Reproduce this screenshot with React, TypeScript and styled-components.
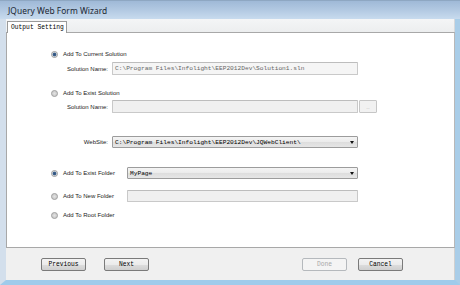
import styled, { createGlobalStyle } from "styled-components";

const GlobalStyle = createGlobalStyle`
  html, body {
    margin: 0;
    padding: 0;
    background: #ffffff;
  }
  * {
    box-sizing: border-box;
  }
`;

type RadioProps = { $checked?: boolean };

const Radio = ({ checked }: { checked?: boolean }) => (
  <RadioCircle $checked={checked} aria-checked={checked} role="radio" />
);

const App = () => {
  return (
    <>
      <GlobalStyle />
      <Window>
        <TitleBar>JQuery Web Form Wizard</TitleBar>
        <TabStrip>
          <Tab>Output Setting</Tab>
        </TabStrip>
        <Content>
          <RadioRow $top={16}>
            <Radio checked />
            <RadioLabel>Add To Current Solution</RadioLabel>
          </RadioRow>
          <FieldRow $top={3} $height={13}>
            <FieldLabel>Solution Name:</FieldLabel>
            <TextBox $readOnly>C:\Program Files\Infolight\EEP2012Dev\Solution1.sln</TextBox>
          </FieldRow>

          <RadioRow $top={13}>
            <Radio />
            <RadioLabel>Add To Exist Solution</RadioLabel>
          </RadioRow>
          <FieldRow $top={2} $height={13}>
            <FieldLabel>Solution Name:</FieldLabel>
            <TextBox $disabled />
            <BrowseButton>..</BrowseButton>
          </FieldRow>

          <FieldRow $top={23} $height={12}>
            <FieldLabel>WebSite:</FieldLabel>
            <Select>
              <span>C:\Program Files\Infolight\EEP2012Dev\JQWebClient\</span>
              <Arrow />
            </Select>
          </FieldRow>

          <FolderRow $top={19}>
            <RadioOption>
              <Radio checked />
              <RadioLabel>Add To Exist Folder</RadioLabel>
            </RadioOption>
            <Select>
              <span>MyPage</span>
              <Arrow />
            </Select>
          </FolderRow>
          <FolderRow $top={11}>
            <RadioOption>
              <Radio />
              <RadioLabel>Add To New Folder</RadioLabel>
            </RadioOption>
            <TextBox $disabled />
          </FolderRow>
          <RadioRow $top={8}>
            <Radio />
            <RadioLabel>Add To Root Folder</RadioLabel>
          </RadioRow>
        </Content>
        <ButtonBar>
          <Button>Previous</Button>
          <Button>Next</Button>
          <Spacer />
          <Button disabled>Done</Button>
          <Button>Cancel</Button>
        </ButtonBar>
      </Window>
    </>
  );
};

const Window = styled.div`
  width: 460px;
  height: 285px;
  display: flex;
  flex-direction: column;
  background: #c7d8ea;
  border-left: 6px solid #d3dfec;
  border-right: 5px solid #a9cde8;
  border-bottom: 5px solid #9fcbeb;
  box-shadow: inset -1px 0 0 #5f8eae, inset 1px 0 0 #9fb3c8;
  font-family: "Liberation Sans", Arial, sans-serif;
`;

const TitleBar = styled.div`
  height: 19px;
  flex: 0 0 auto;
  display: flex;
  align-items: center;
  padding: 1px 0 0 8px;
  margin: 0 -5px 0 -6px;
  border-top: 1px solid #8ea7c2;
  background: linear-gradient(to bottom, #9fb9d7 0%, #b2c9e2 50%, #c8dbee 100%);
  color: #1b2733;
  font-family: "Noto Sans", "Liberation Sans", sans-serif;
  font-size: 8.4px;
  letter-spacing: 0.05px;
`;

const TabStrip = styled.div`
  height: 13px;
  flex: 0 0 auto;
  display: flex;
  align-items: flex-end;
  padding-left: 1px;
  background: linear-gradient(to bottom, #f4f5f6, #eceeef);
  border-right: 1px solid #d6d9dc;
`;

const Tab = styled.div`
  width: 60px;
  height: 12px;
  display: flex;
  align-items: center;
  padding-left: 3px;
  margin-bottom: -1px;
  background: #ffffff;
  border: 1px solid #9a9a9a;
  border-bottom: none;
  font-family: "Liberation Mono", monospace;
  font-size: 6.3px;
  color: #000;
  position: relative;
  z-index: 1;
`;

const Content = styled.div`
  height: 216px;
  flex: 0 0 auto;
  display: flex;
  flex-direction: column;
  background: #ffffff;
  border: 1px solid #a8a8a8;
  border-right-color: #b8b8b8;
`;

const RadioRow = styled.div<{ $top: number }>`
  height: 10px;
  margin-top: ${({ $top }) => $top}px;
  padding-left: 44px;
  display: flex;
  align-items: center;
`;

const RadioOption = styled.div`
  display: flex;
  align-items: center;
`;

const RadioCircle = styled.span<RadioProps>`
  width: 7px;
  height: 7px;
  border-radius: 50%;
  border: 1px solid #9a9a9a;
  background: ${({ $checked }) =>
    $checked
      ? "radial-gradient(circle, #2f4f7a 0, #3d6490 1.6px, #d9dde2 2.2px, #f1f1f1 100%)"
      : "radial-gradient(circle, #e3e3e3 0, #cfcfcf 2px, #eeeeee 100%)"};
  flex: 0 0 auto;
`;

const RadioLabel = styled.span`
  margin-left: 5px;
  font-size: 6px;
  color: #222;
  white-space: nowrap;
`;

const FieldRow = styled.div<{ $top: number; $height: number }>`
  height: ${({ $height }) => $height}px;
  margin-top: ${({ $top }) => $top}px;
  display: grid;
  grid-template-columns: 101px 246px 15px;
  column-gap: 4px;
  align-items: stretch;

  & > :nth-child(3) {
    margin-left: -3px;
  }
`;

const FieldLabel = styled.span`
  display: flex;
  align-items: center;
  justify-content: flex-end;
  font-size: 6px;
  color: #222;
  white-space: nowrap;
`;

const FolderRow = styled.div<{ $top: number }>`
  height: 12px;
  margin-top: ${({ $top }) => $top}px;
  padding-left: 44px;
  display: grid;
  grid-template-columns: 76px 231px;
  align-items: stretch;

  & > :first-child {
    align-self: center;
  }
`;

const TextBox = styled.div<{ $readOnly?: boolean; $disabled?: boolean }>`
  display: flex;
  align-items: center;
  padding-left: 2px;
  border: 1px solid #c9c9c9;
  border-top-color: #bdbdbd;
  border-radius: 1px;
  background: ${({ $readOnly }) => ($readOnly ? "#f5f5f5" : "#f0f0f0")};
  font-family: "Liberation Mono", monospace;
  font-size: 6.2px;
  color: #666;
  white-space: nowrap;
  overflow: hidden;
`;

const BrowseButton = styled.div`
  display: flex;
  align-items: center;
  justify-content: center;
  border: 1px solid #c6c6c6;
  border-radius: 1px;
  background: #f1f1f1;
  font-size: 6px;
  color: #b0b0b0;
`;

const Select = styled.div`
  display: flex;
  align-items: center;
  justify-content: space-between;
  padding: 0 3px 0 2px;
  border: 1px solid #9c9c9c;
  border-radius: 1px;
  background: linear-gradient(to bottom, #f4f4f4 0%, #ebebeb 50%, #dddddd 51%, #e6e6e6 100%);
  font-family: "Liberation Mono", monospace;
  font-size: 6.2px;
  color: #000;
  white-space: nowrap;
`;

const Arrow = styled.span`
  width: 0;
  height: 0;
  border-left: 2.5px solid transparent;
  border-right: 2.5px solid transparent;
  border-top: 3px solid #111;
`;

const ButtonBar = styled.div`
  flex: 1;
  display: flex;
  align-items: flex-start;
  padding: 10px 51px 0 35px;
  column-gap: 18px;
  background: #f0f0f0;
  border-right: 1px solid #d0d0d0;

  & > :nth-child(4) {
    margin-right: -7px;
  }
`;

const Spacer = styled.div`
  flex: 1;
`;

const Button = styled.button`
  width: 45px;
  height: 13px;
  padding: 0;
  margin: 0;
  border: 1px solid #7a7a7a;
  border-radius: 2px;
  background: linear-gradient(to bottom, #f3f3f3 0%, #ebebeb 50%, #dddddd 51%, #cfcfcf 100%);
  font-family: "Liberation Mono", monospace;
  font-size: 6.3px;
  color: #000;

  &:disabled {
    border-color: #b5b9bd;
    background: #f4f4f4;
    color: #a8a8a8;
  }
`;

export default App;
